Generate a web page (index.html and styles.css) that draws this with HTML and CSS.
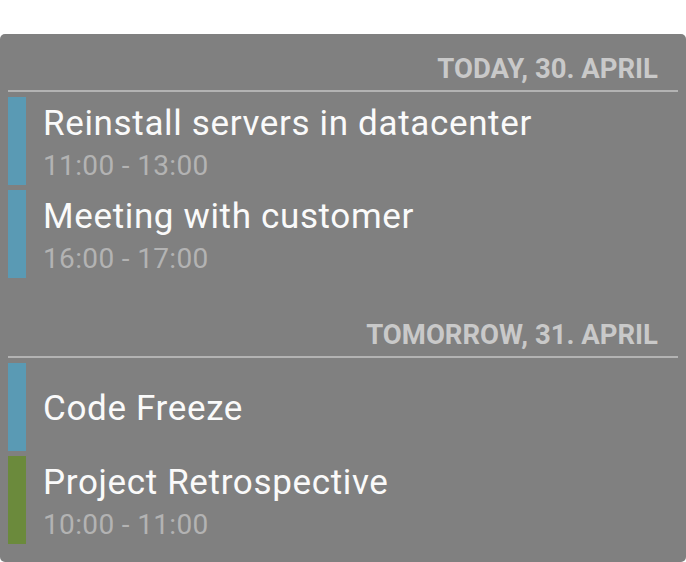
FILE: index.html
```html
<!DOCTYPE html>
<html>
<head>
<meta charset="utf-8">
<link rel="stylesheet" href="styles.css">
</head>
<body>
<div class="panel">
  <section class="day">
    <div class="day-header">TODAY, 30. APRIL</div>
    <div class="events">
      <div class="event">
        <div class="bar bar-blue"></div>
        <div class="content">
          <div class="title">Reinstall servers in datacenter</div>
          <div class="time">11:00 - 13:00</div>
        </div>
      </div>
      <div class="event">
        <div class="bar bar-blue"></div>
        <div class="content">
          <div class="title">Meeting with customer</div>
          <div class="time">16:00 - 17:00</div>
        </div>
      </div>
    </div>
  </section>
  <section class="day day-next">
    <div class="day-header">TOMORROW, 31. APRIL</div>
    <div class="events">
      <div class="event">
        <div class="bar bar-blue"></div>
        <div class="content">
          <div class="title">Code Freeze</div>
        </div>
      </div>
      <div class="event">
        <div class="bar bar-green"></div>
        <div class="content">
          <div class="title">Project Retrospective</div>
          <div class="time">10:00 - 11:00</div>
        </div>
      </div>
    </div>
  </section>
</div>
</body>
</html>
```
FILE: styles.css
```css
html, body {
  margin: 0;
  padding: 0;
  background: #ffffff;
}
body {
  font-family: Roboto, "Liberation Sans", sans-serif;
}
.panel {
  margin-top: 34px;
  height: 528px;
  box-sizing: border-box;
  background: #808080;
  border-radius: 5px;
  padding: 0 8px;
  overflow: hidden;
}
.day-header {
  text-align: right;
  padding: 19px 20px 5px 0;
  font-weight: 700;
  font-size: 27.5px;
  line-height: 32px;
  color: #c9c9c9;
  border-bottom: 2px solid #b3b3b3;
}
.day-next {
  margin-top: 39px;
}
.day-next .day-header {
  padding-top: 2px;
}
.events {
  display: flex;
  flex-direction: column;
  gap: 5px;
  margin-top: 5px;
}
.event {
  display: flex;
  height: 88px;
}
.bar {
  width: 18px;
  flex: none;
}
.bar-blue {
  background: #5a9ab4;
}
.bar-green {
  background: #6b8a3c;
}
.content {
  display: flex;
  flex-direction: column;
  justify-content: center;
  padding-left: 17px;
  padding-top: 3px;
}
.title {
  font-size: 35px;
  line-height: 40px;
  letter-spacing: 0.65px;
  color: #fafafa;
  margin-bottom: 6px;
}
.content .title:last-child {
  margin-bottom: 0;
}
.time {
  font-size: 28px;
  line-height: 32px;
  letter-spacing: 0.35px;
  color: #b3b3b3;
}
```
